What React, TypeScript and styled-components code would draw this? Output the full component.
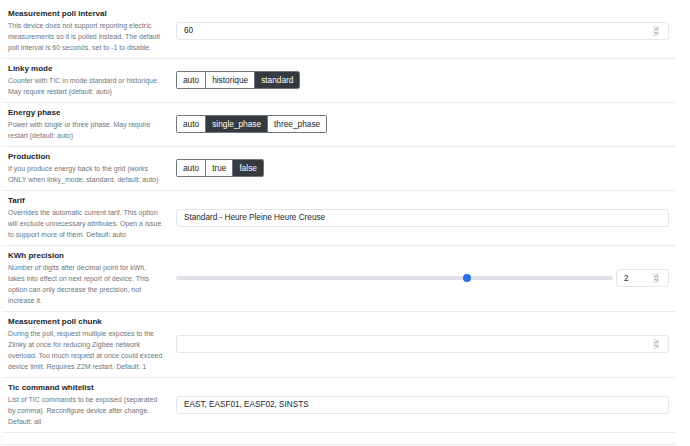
import React from 'react';
import styled, { createGlobalStyle } from 'styled-components';

const GlobalStyle = createGlobalStyle`
  html, body {
    margin: 0;
    padding: 0;
    background: #ffffff;
  }
  body {
    font-family: "Liberation Sans", Arial, sans-serif;
    color: #212529;
    -webkit-font-smoothing: antialiased;
  }
`;

type Setting =
  | { kind: 'input'; title: string; desc: string; value: string; number?: boolean }
  | { kind: 'group'; title: string; desc: string; options: string[]; active: string }
  | { kind: 'range'; title: string; desc: string; value: number; min: number; max: number };

const settings: Setting[] = [
  {
    kind: 'input',
    title: 'Measurement poll interval',
    desc: 'This device does not support reporting electric measurements so it is polled instead. The default poll interval is 60 seconds, set to -1 to disable.',
    value: '60',
    number: true,
  },
  {
    kind: 'group',
    title: 'Linky mode',
    desc: 'Counter with TIC in mode standard or historique. May require restart (default: auto)',
    options: ['auto', 'historique', 'standard'],
    active: 'standard',
  },
  {
    kind: 'group',
    title: 'Energy phase',
    desc: 'Power with single or three phase. May require restart (default: auto)',
    options: ['auto', 'single_phase', 'three_phase'],
    active: 'single_phase',
  },
  {
    kind: 'group',
    title: 'Production',
    desc: 'If you produce energy back to the grid (works ONLY when linky_mode: standard, default: auto)',
    options: ['auto', 'true', 'false'],
    active: 'false',
  },
  {
    kind: 'input',
    title: 'Tarif',
    desc: 'Overrides the automatic current tarif. This option will exclude unnecessary attributes. Open a issue to support more of them. Default: auto',
    value: 'Standard - Heure Pleine Heure Creuse',
  },
  {
    kind: 'range',
    title: 'KWh precision',
    desc: 'Number of digits after decimal point for kWh, takes into effect on next report of device. This option can only decrease the precision, not increase it.',
    value: 2,
    min: 0,
    max: 3,
  },
  {
    kind: 'input',
    title: 'Measurement poll chunk',
    desc: 'During the poll, request multiple exposes to the Zlinky at once for reducing Zigbee network overload. Too much request at once could exceed device limit. Requires Z2M restart. Default: 1',
    value: '',
    number: true,
  },
  {
    kind: 'input',
    title: 'Tic command whitelist',
    desc: 'List of TIC commands to be exposed (separated by comma). Reconfigure device after change. Default: all',
    value: 'EAST, EASF01, EASF02, SINSTS',
  },
];

const Spinner = () => (
  <SpinBox>
    <svg width="5" height="8" viewBox="0 0 5 8" fill="none" stroke="#7d848c" strokeWidth="0.8">
      <path d="M1 3 L2.5 1.4 L4 3" />
      <path d="M1 5 L2.5 6.6 L4 5" />
    </svg>
  </SpinBox>
);

const Control = ({ setting }: { setting: Setting }) => {
  if (setting.kind === 'group') {
    return (
      <Group>
        {setting.options.map((o) => (
          <GroupButton key={o} $active={o === setting.active}>
            {o}
          </GroupButton>
        ))}
      </Group>
    );
  }
  if (setting.kind === 'range') {
    const pct = ((setting.value - setting.min) / (setting.max - setting.min)) * 100;
    return (
      <RangeRow>
        <Track>
          <Thumb style={{ left: `${pct}%` }} />
        </Track>
        <FieldWrap $width="53px">
          <Field readOnly value={String(setting.value)} />
          <Spinner />
        </FieldWrap>
      </RangeRow>
    );
  }
  return (
    <FieldWrap>
      <Field readOnly value={setting.value} />
      {setting.number && <Spinner />}
    </FieldWrap>
  );
};

export default function App() {
  return (
    <>
      <GlobalStyle />
      <Page>
        {settings.map((s) => (
          <Row key={s.title}>
            <Info>
              <Title>{s.title}</Title>
              <Desc>{s.desc}</Desc>
            </Info>
            <Control setting={s} />
          </Row>
        ))}
        <Footer />
      </Page>
    </>
  );
}

const Page = styled.div`
  width: 674px;
  padding-top: 4px;
  margin-left: 2px;
`;

const Row = styled.div`
  display: grid;
  grid-template-columns: 160px 1fr;
  column-gap: 8px;
  align-items: center;
  padding: 4px 7px 5px 6px;
  border-bottom: 1px solid #e9ecef;
`;

const Info = styled.div`
  display: flex;
  flex-direction: column;
`;

const Title = styled.div`
  font-size: 8px;
  font-weight: 700;
  line-height: 12px;
  color: #212529;
`;

const Desc = styled.div`
  max-width: 155.5px;
  font-size: 7px;
  line-height: 11px;
  color: #6c757d;
`;

const FieldWrap = styled.div<{ $width?: string }>`
  position: relative;
  width: ${({ $width }) => $width || '100%'};
  flex-shrink: 0;
`;

const Field = styled.input`
  box-sizing: border-box;
  display: block;
  width: 100%;
  height: 18px;
  padding: 0 7px;
  border: 1px solid #e3e7ed;
  border-radius: 3px;
  font-family: "Liberation Sans", Arial, sans-serif;
  font-size: 8.2px;
  color: #212529;
  background: #fff;
  outline: none;
`;

const SpinBox = styled.span`
  position: absolute;
  right: 10px;
  top: 4px;
  width: 6px;
  height: 10px;
  background: #e9ebee;
  display: flex;
  align-items: center;
  justify-content: center;
`;

const Group = styled.div`
  display: flex;
  justify-self: start;
  border: 1px solid #6c757d;
  border-radius: 2px;
  overflow: hidden;
`;

const GroupButton = styled.span<{ $active: boolean }>`
  height: 16px;
  display: flex;
  align-items: center;
  padding: 0 6px;
  font-size: 8.3px;
  color: ${({ $active }) => ($active ? '#ffffff' : '#212529')};
  background: ${({ $active }) => ($active ? '#343a40' : '#ffffff')};
  & + & {
    border-left: 1px solid #6c757d;
  }
`;

const RangeRow = styled.div`
  display: flex;
  align-items: center;
  gap: 3px;
`;

const Track = styled.div`
  position: relative;
  flex: 1;
  height: 4px;
  border-radius: 2px;
  background: #dee2e6;
`;

const Thumb = styled.span`
  position: absolute;
  top: 50%;
  width: 8px;
  height: 8px;
  border-radius: 50%;
  background: #2c6fe2;
  transform: translate(-50%, -50%);
`;

const Footer = styled.div`
  height: 11px;
  border-bottom: 1px solid #e9ecef;
`;
